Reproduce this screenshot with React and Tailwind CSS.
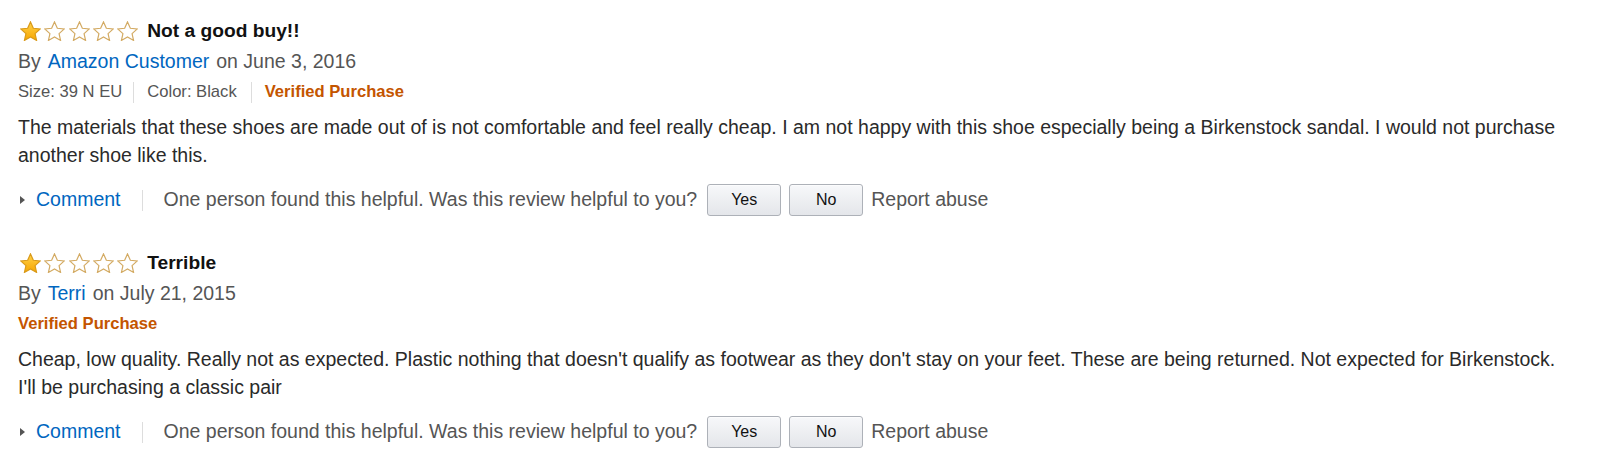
import React from 'react';

const reviews = [
  {
    id: 1,
    title: 'Not a good buy!!',
    author: 'Amazon Customer',
    date: 'June 3, 2016',
    size: '39 N EU',
    color: 'Black',
    body: 'The materials that these shoes are made out of is not comfortable and feel really cheap. I am not happy with this shoe especially being a Birkenstock sandal. I would not purchase another shoe like this.',
  },
  {
    id: 2,
    title: 'Terrible',
    author: 'Terri',
    date: 'July 21, 2015',
    body: "Cheap, low quality. Really not as expected. Plastic nothing that doesn't qualify as footwear as they don't stay on your feet. These are being returned. Not expected for Birkenstock. I'll be purchasing a classic pair",
  },
];

const STAR = 'M10.5 0.9l2.85 6.35 6.9 0.72-5.17 4.63 1.47 6.8-6.05-3.5-6.05 3.5 1.47-6.8L0.75 7.97l6.9-0.72z';

function Star({ filled }) {
  return (
    <svg width="21" height="20" viewBox="0 0 21 20" className="shrink-0">
      <defs>
        <linearGradient id="gold" x1="0" y1="0" x2="0" y2="1">
          <stop offset="0" stopColor="#ffd24a" />
          <stop offset="1" stopColor="#f7a600" />
        </linearGradient>
      </defs>
      <path
        d={STAR}
        fill={filled ? 'url(#gold)' : '#ffffff'}
        stroke={filled ? '#d99a1a' : '#d3aa62'}
        strokeWidth="1.2"
        strokeLinejoin="miter"
      />
    </svg>
  );
}

function Stars({ count }) {
  return (
    <div className="flex items-center gap-[3.3px]">
      {[1, 2, 3, 4, 5].map((n) => (
        <Star key={n} filled={n <= count} />
      ))}
    </div>
  );
}

function VoteButton({ children }) {
  return (
    <button className="h-[32px] w-[74px] rounded-[3px] border border-[#adb1b8] bg-gradient-to-b from-[#f7f8fa] to-[#e4e6ea] text-[16px] text-[#111] shadow-[0_1px_0_rgba(255,255,255,0.6)_inset]">
      {children}
    </button>
  );
}

function Review({ review }) {
  return (
    <div>
      <div className="flex h-[30px] items-center pl-[2px]">
        <Stars count={1} />
        <span className="ml-[9px] text-[19.2px] font-bold text-[#111]">{review.title}</span>
      </div>
      <div className="flex h-[31px] items-center text-[19.5px] text-[#555]">
        <span>By</span>
        <a className="mx-[7px] text-[#0066c0]">{review.author}</a>
        <span>on {review.date}</span>
      </div>
      <div className="flex h-[30px] items-center text-[16.6px]">
        {review.size && (
          <>
            <span className="text-[#555]">Size: {review.size}</span>
            <span className="ml-[11px] mr-[13px] h-[21px] w-px bg-[#ddd]" />
            <span className="text-[#555]">Color: {review.color}</span>
            <span className="ml-[14px] mr-[13px] h-[21px] w-px bg-[#ddd]" />
          </>
        )}
        <span className="font-bold text-[#c45500]">Verified Purchase</span>
      </div>
      <p className="mt-[6px] w-[1552px] text-[19.5px] leading-[28px] text-[#2a2a2a]">{review.body}</p>
      <div className="mt-[15px] flex h-[32px] items-center text-[19.5px]">
        <span className="ml-[2px] h-0 w-0 border-y-[4px] border-l-[5px] border-y-transparent border-l-[#555]" />
        <a className="ml-[11px] text-[#0066c0]">Comment</a>
        <span className="ml-[21px] h-[21px] w-px bg-[#ddd]" />
        <span className="ml-[21px] text-[#555]">One person found this helpful. Was this review helpful to you?</span>
        <div className="ml-[10px] flex gap-[8px]">
          <VoteButton>Yes</VoteButton>
          <VoteButton>No</VoteButton>
        </div>
        <span className="ml-[8px] text-[#555]">Report abuse</span>
      </div>
    </div>
  );
}

export default function App() {
  return (
    <div className="min-h-[460px] bg-white pl-[18px] pt-[16px] font-['Liberation_Sans',Arial,sans-serif]">
      <div className="flex flex-col gap-[32px]">
        {reviews.map((r) => (
          <Review key={r.id} review={r} />
        ))}
      </div>
    </div>
  );
}
